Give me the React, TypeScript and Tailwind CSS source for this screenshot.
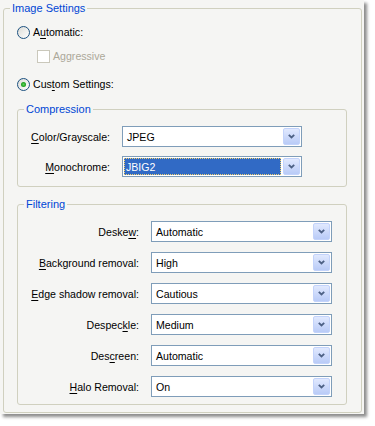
import type { ReactNode } from 'react'

const font = { fontFamily: '"Liberation Sans", Arial, sans-serif' }

function Key({ children }: { children: ReactNode }) {
  return <span className="underline underline-offset-[2px] decoration-[1px]">{children}</span>
}

function Radio({ checked }: { checked?: boolean }) {
  return (
    <span className="flex h-[13px] w-[13px] items-center justify-center rounded-full border border-[#1c5180] bg-gradient-to-br from-[#dcdcd7] to-white">
      {checked && <span className="h-[5px] w-[5px] rounded-full bg-[radial-gradient(circle,#5ad25a_0%,#21a121_60%,#1b8a1b_100%)]" />}
    </span>
  )
}

function Chevron() {
  return (
    <span className="mr-[1px] flex h-[17px] w-[17px] items-center justify-center rounded-[2px] border border-[#c3d3fb] bg-gradient-to-b from-[#e1e9fe] to-[#b9cbf7]">
      <svg width="7" height="5" viewBox="0 0 7 5">
        <path d="M0.8 0.8 L3.5 3.5 L6.2 0.8" fill="none" stroke="#4d6185" strokeWidth="1.8" />
      </svg>
    </span>
  )
}

function Select({ value, width, selected }: { value: string; width: string; selected?: boolean }) {
  return (
    <div className={`flex h-[21px] items-center border border-[#7f9db9] bg-white ${width}`}>
      {selected ? (
        <div className="ml-[1px] mr-[2px] flex h-[17px] flex-1 items-center bg-[#316ac5] pl-[2px] text-white outline-1 outline-dotted outline-[#f0cf6c] -outline-offset-1">
          {value}
        </div>
      ) : (
        <div className="flex-1 pl-[4px]">{value}</div>
      )}
      <Chevron />
    </div>
  )
}

function Group({ title, className, children }: { title: string; className: string; children: ReactNode }) {
  return (
    <fieldset className={`rounded-[3px] border border-[#d0d0bf] ${className}`}>
      <legend className="ml-[6px] px-[2px] text-[11px] leading-[14px] text-[#0046d5]">{title}</legend>
      {children}
    </fieldset>
  )
}

const compression = [
  { label: <><Key>C</Key>olor/Grayscale:</>, value: 'JPEG' },
  { label: <><Key>M</Key>onochrome:</>, value: 'JBIG2', selected: true },
]

const filtering = [
  { label: <>Deske<Key>w</Key>:</>, value: 'Automatic' },
  { label: <><Key>B</Key>ackground removal:</>, value: 'High' },
  { label: <><Key>E</Key>dge shadow removal:</>, value: 'Cautious' },
  { label: <>Despec<Key>k</Key>le:</>, value: 'Medium' },
  { label: <>Des<Key>c</Key>reen:</>, value: 'Automatic' },
  { label: <><Key>H</Key>alo Removal:</>, value: 'On' },
]

export default function App() {
  return (
    <div className="h-[426px] w-[375px] bg-white text-[10.6px] leading-[14px] text-black" style={font}>
      <div className="h-[414px] w-[364px] bg-[#f5f5f3] px-[3px] pt-[1px] shadow-[3px_3px_3px_rgba(0,0,0,0.45)]">
        <Group title="Image Settings" className="h-[412px] w-[359px]">
          <div className="mt-[10px] flex items-center gap-[3px] pl-[13px]">
            <Radio />
            <span>
              A<Key>u</Key>tomatic:
            </span>
          </div>
          <div className="mt-[10px] flex items-center gap-[3px] pl-[33px] text-[#aca899]">
            <span className="h-[13px] w-[13px] border border-[#cac8bb] bg-white" />
            <span>Aggressive</span>
          </div>
          <div className="mt-[14px] flex items-center gap-[3px] pl-[13px]">
            <Radio checked />
            <span>
              Cus<Key>t</Key>om Settings:
            </span>
          </div>

          <Group title="Compression" className="ml-[13px] mt-[11px] w-[330px] pb-[9px]">
            <div className="mt-[10px] flex flex-col gap-[9px]">
              {compression.map((row) => (
                <div key={row.value} className="flex items-center">
                  <div className="w-[92px] text-right">{row.label}</div>
                  <div className="ml-[12px]">
                    <Select value={row.value} width="w-[180px]" selected={row.selected} />
                  </div>
                </div>
              ))}
            </div>
          </Group>

          <Group title="Filtering" className="ml-[13px] mt-[10px] w-[330px] pb-[7px]">
            <div className="mt-[10px] flex flex-col gap-[10px]">
              {filtering.map((row, i) => (
                <div key={i} className="flex items-center">
                  <div className="w-[121px] text-right">{row.label}</div>
                  <div className="ml-[12px]">
                    <Select value={row.value} width="w-[181px]" />
                  </div>
                </div>
              ))}
            </div>
          </Group>
        </Group>
      </div>
    </div>
  )
}
